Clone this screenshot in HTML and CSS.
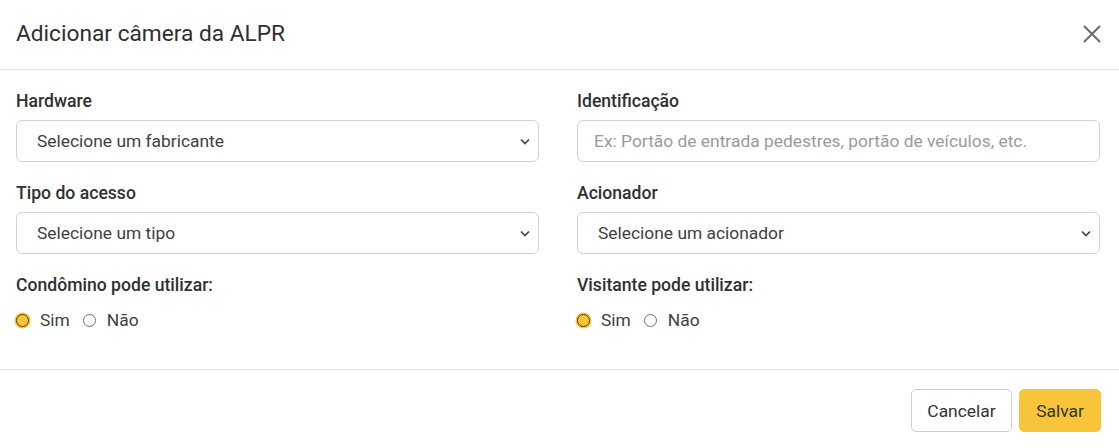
FILE: index.html
```html
<!DOCTYPE html>
<html lang="pt-BR">
<head>
<meta charset="utf-8">
<link rel="stylesheet" href="styles.css">
</head>
<body>
<div class="modal">
  <header class="modal-header">
    <h1 class="modal-title">Adicionar câmera da ALPR</h1>
    <button class="close" aria-label="Fechar">
      <svg width="20" height="20" viewBox="0 0 20 20"><path d="M2 2L18 18M18 2L2 18" stroke="#6b6b6b" stroke-width="2" fill="none"/></svg>
    </button>
  </header>
  <div class="modal-body">
    <div class="grid">
      <div class="field">
        <label class="label">Hardware</label>
        <div class="select"><span>Selecione um fabricante</span><svg class="chev" width="10" height="7" viewBox="0 0 10 7"><path d="M1 1.5l4 4 4-4" stroke="#444" stroke-width="1.7" fill="none"/></svg></div>
      </div>
      <div class="field">
        <label class="label">Identificação</label>
        <div class="input"><span class="ph">Ex: Portão de entrada pedestres, portão de veículos, etc.</span></div>
      </div>
      <div class="field">
        <label class="label">Tipo do acesso</label>
        <div class="select"><span>Selecione um tipo</span><svg class="chev" width="10" height="7" viewBox="0 0 10 7"><path d="M1 1.5l4 4 4-4" stroke="#444" stroke-width="1.7" fill="none"/></svg></div>
      </div>
      <div class="field">
        <label class="label">Acionador</label>
        <div class="select"><span>Selecione um acionador</span><svg class="chev" width="10" height="7" viewBox="0 0 10 7"><path d="M1 1.5l4 4 4-4" stroke="#444" stroke-width="1.7" fill="none"/></svg></div>
      </div>
      <div class="field">
        <label class="label">Condômino pode utilizar:</label>
        <div class="radios">
          <span class="radio checked"></span><span class="rtext">Sim</span>
          <span class="radio"></span><span class="rtext">Não</span>
        </div>
      </div>
      <div class="field">
        <label class="label">Visitante pode utilizar:</label>
        <div class="radios">
          <span class="radio checked"></span><span class="rtext">Sim</span>
          <span class="radio"></span><span class="rtext">Não</span>
        </div>
      </div>
    </div>
  </div>
  <footer class="modal-footer">
    <button class="btn btn-light">Cancelar</button>
    <button class="btn btn-primary">Salvar</button>
  </footer>
</div>
</body>
</html>
```
FILE: styles.css
```css
* { box-sizing: border-box; }
html, body { margin: 0; padding: 0; background: #fff; }
body { font-family: Roboto, "Liberation Sans", sans-serif; color: #333; }
.modal { width: 1119px; }
.modal-header {
  height: 70px;
  display: flex;
  align-items: center;
  justify-content: space-between;
  padding: 0 16px 2px 16px;
  border-bottom: 1px solid #e3e3e3;
}
.modal-title { margin: 0; font-size: 22.7px; font-weight: 400; color: #2f2f2f; }
.close { border: 0; background: none; padding: 0; width: 20px; height: 20px; display: flex; margin-right: 1px; }
.modal-body { padding: 20px 16px 33px 16px; }
.grid { display: grid; grid-template-columns: 523px 523px; column-gap: 38px; row-gap: 20px; }
.field { display: flex; flex-direction: column; }
.label { font-size: 17.6px; font-weight: 500; line-height: 22px; color: #303030; margin-bottom: 8px; }
.select, .input {
  height: 42px;
  border: 1px solid #d2d2d2;
  border-radius: 6px;
  display: flex;
  align-items: center;
  justify-content: space-between;
  padding: 0 8px 0 20px;
  font-size: 17.4px;
  color: #404040;
}
.chev { flex: none; }
.input { padding-left: 16px; }
.ph { color: #9a9a9a; }
.radios { display: flex; align-items: center; height: 32px; }
.radio {
  width: 13px; height: 13px; border-radius: 50%;
  border: 1px solid #707070; display: inline-block; flex: none;
}
.radio.checked {
  background: #f8c43a;
  border: 1.5px solid #4a3f22;
  box-shadow: 0 0 0 1.5px #f8c43a;
}
.rtext { font-size: 17.4px; color: #404040; margin-left: 11px; margin-right: 13px; }
.modal-footer {
  border-top: 1px solid #e3e3e3;
  display: flex;
  justify-content: flex-end;
  gap: 7px;
  padding: 19px 18px 0 16px;
  height: 78px;
}
.btn {
  height: 43px;
  border-radius: 5px;
  font-family: Roboto, "Liberation Sans", sans-serif;
  font-size: 17.4px;
  color: #333;
  padding: 0;
}
.btn-light { background: #fff; border: 1px solid #cfcfcf; width: 101px; }
.btn-primary { background: #f8c43a; border: 1px solid #f8c43a; width: 82px; }
```
